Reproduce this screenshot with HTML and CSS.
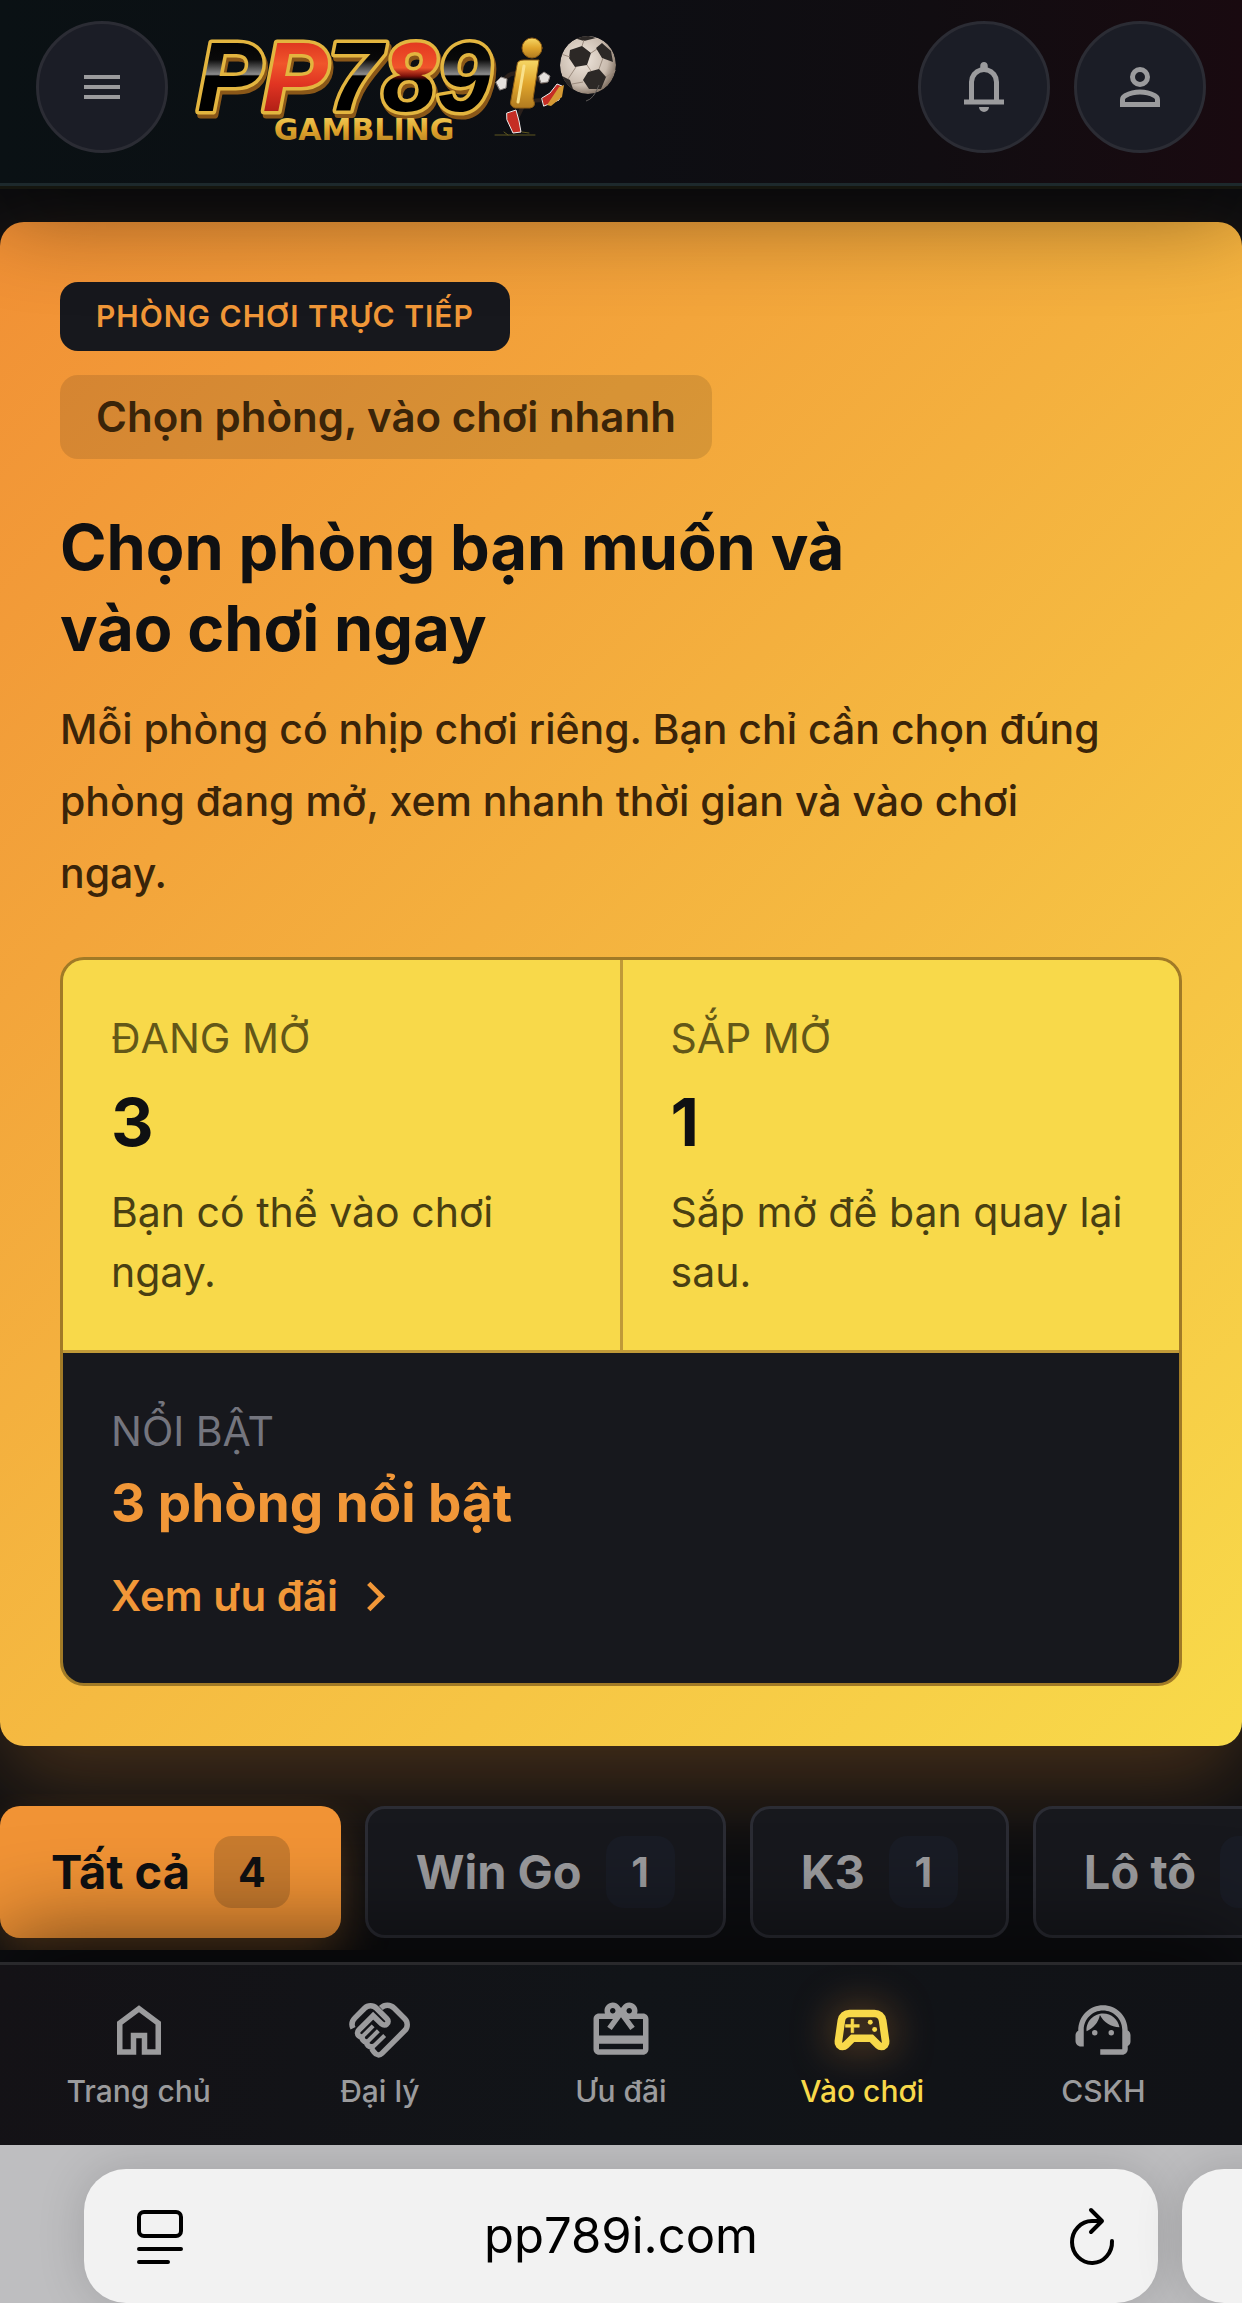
FILE: index.html
```html
<!DOCTYPE html>
<html lang="vi">

<head>

    <meta charset="UTF-8">
    <meta name="viewport" content="width=device-width, initial-scale=1">
    <title>PP789</title>

    <link rel="stylesheet" href="styles.css">

</head>

<body>

<header class="header">
    <button class="round-btn" type="button" aria-label="Menu">
        <svg class="icon-menu" viewBox="0 0 24 24"><path d="M3 18h18v-2H3zm0-5h18v-2H3zm0-7v2h18V6z"/></svg>
    </button>
    <a class="logo" href="#" aria-label="PP789 Gambling">
        <svg viewBox="0 0 426 120">
            <defs>
                <linearGradient id="gold" x1="0" y1="0" x2="0" y2="1">
                    <stop offset="0" stop-color="#f6d765"/>
                    <stop offset=".5" stop-color="#e0a52c"/>
                    <stop offset="1" stop-color="#b07a20"/>
                </linearGradient>
                <linearGradient id="black" gradientUnits="userSpaceOnUse" x1="0" y1="8" x2="0" y2="90">
                    <stop offset="0" stop-color="#000"/>
                    <stop offset=".3" stop-color="#0a0a0a"/>
                    <stop offset=".48" stop-color="#8c8c8c"/>
                    <stop offset=".5" stop-color="#000"/>
                    <stop offset="1" stop-color="#000"/>
                </linearGradient>
                <linearGradient id="red" gradientUnits="userSpaceOnUse" x1="0" y1="8" x2="0" y2="90">
                    <stop offset="0" stop-color="#d92c1c"/>
                    <stop offset=".35" stop-color="#f0552b"/>
                    <stop offset=".6" stop-color="#e03422"/>
                    <stop offset="1" stop-color="#a81c14"/>
                </linearGradient>
                <linearGradient id="redblack" gradientUnits="userSpaceOnUse" x1="0" y1="8" x2="0" y2="90">
                    <stop offset="0" stop-color="#e0301d"/>
                    <stop offset=".4" stop-color="#f0552b"/>
                    <stop offset=".5" stop-color="#7d120c"/>
                    <stop offset=".55" stop-color="#000"/>
                    <stop offset="1" stop-color="#000"/>
                </linearGradient>
                <radialGradient id="leather" cx=".4" cy=".4" r=".65">
                    <stop offset="0" stop-color="#f1e8df"/>
                    <stop offset=".7" stop-color="#c9bbae"/>
                    <stop offset="1" stop-color="#7a6a5c"/>
                </radialGradient>
                <clipPath id="ball"><ellipse cx="396" cy="51" rx="28" ry="29"/></clipPath>
            </defs>
            <text class="logo-main" x="5" y="84"><tspan fill="url(#black)">P</tspan><tspan fill="url(#red)">P</tspan><tspan fill="url(#black)">7</tspan><tspan fill="url(#redblack)">8</tspan><tspan fill="url(#black)">9</tspan></text>
            <text class="logo-sub" x="172" y="113">GAMBLING</text>
            <!-- mascot -->
            <g transform="translate(8 3)" stroke-linecap="round" stroke-linejoin="round">
                <path class="line" d="M319 44q-10-3-16 8M337 48q6 8 11 1M333 71q10-2 15 2M322 78l-4 8" stroke="#2a201b" stroke-width="4"/>
                <path d="M317 35q0-5 7-5h15l-6 39q4 8-3 9h-15q-6-2-4-8l5-29z" fill="url(#gold)" stroke="#8d5c14" stroke-width="1"/>
                <path class="line" d="M324 36l-6 36" stroke="#f9e08a" stroke-width="3"/>
                <ellipse cx="332" cy="18" rx="10" ry="10" fill="url(#gold)" stroke="#8d5c14"/>
                <path d="M296 52l5-5 6 2-1 9-6 2zM339 46l5-4 6 4-2 6-7 1z" fill="#e5e1dd" stroke="#8b8380"/>
                <path d="M342 68l8-5 7-9 5 2-3 14-15 6z" fill="#c52d24" stroke="#eee" stroke-width="1"/>
                <path d="M347 75l12-18 5-2-2 12-11 9z" fill="#d59a34"/>
                <path d="M307 83l9-3 3 11 2 11-8 1-6-13z" fill="#c52d24" stroke="#eee" stroke-width="1"/>
                <path class="line" d="M295 105h40M304 102l4 3M322 102l7 1" stroke="#5f5720" stroke-width="1"/>
            </g>
            <g transform="translate(0 -13)">
                <g clip-path="url(#ball)">
                    <ellipse cx="396" cy="51" rx="28" ry="29" fill="url(#leather)"/>
                    <path d="M378 36l12-4 9 7-4 12-12 2-6-9zM410 29l9 8 2 11-11-4-6-10zM396 58l11-3 7 8-5 12-12 0-6-9zM382 24l12-3 10 3-12 3zM370 62l8 4 4 12-10-6z" fill="#2c2826"/>
                    <path class="line" d="M399 39l6-4M395 51l4 6M378 43l-9-3M384 53l-8 12M411 44l-4 11M414 63l12-8M391 68l-11 2M390 32l2-6" stroke="#9b8b7e"/>
                </g>
            </g>
            <path class="line" d="M394 74q8-2 13-16" stroke="#5d5a58"/>
        </svg>
    </a>
    <div class="header-actions">
        <button class="round-btn" type="button" aria-label="Thông báo">
            <svg class="icon-top" viewBox="0 0 24 24"><path d="M4 19v-2h2v-7q0-2.075 1.25-3.687T10.5 4.2v-.7q0-.625.438-1.062T12 2t1.063.438T13.5 3.5v.7q2 .5 3.25 2.113T18 10v7h2v2zm8 3q-.825 0-1.412-.587T10 20h4q0 .825-.587 1.413T12 22m-4-5h8v-7q0-1.65-1.175-2.825T12 6T9.175 7.175T8 10z"/></svg>
        </button>
        <button class="round-btn" type="button" aria-label="Tài khoản">
            <svg class="icon-top" viewBox="0 0 24 24"><path d="M12 12q-1.65 0-2.825-1.175T8 8t1.175-2.825T12 4t2.825 1.175T16 8t-1.175 2.825T12 12m-8 8v-2.8q0-.85.438-1.562T5.6 14.55q1.55-.775 3.15-1.162T12 13t3.25.388t3.15 1.162q.725.375 1.163 1.088T20 17.2V20zm2-2h12v-.8q0-.275-.137-.5t-.363-.35q-1.35-.675-2.725-1.012T12 15t-2.775.338T6.5 16.35q-.225.125-.362.35T6 17.2zm6-8q.825 0 1.413-.587T14 8t-.587-1.412T12 6t-1.412.588T10 8t.588 1.413T12 10"/></svg>
        </button>
    </div>
</header>

<main class="content">
    <section class="hero">
        <span class="hero-badge">PHÒNG CHƠI TRỰC TIẾP</span>
        <span class="hero-chip">Chọn phòng, vào chơi nhanh</span>
        <h1 class="hero-title">Chọn phòng bạn muốn và<br>vào chơi ngay</h1>
        <p class="hero-text">Mỗi phòng có nhịp chơi riêng. Bạn chỉ cần chọn đúng phòng đang mở, xem nhanh thời gian và vào chơi ngay.</p>

        <div class="stats">
            <div class="stat">
                <div class="stat-label">ĐANG MỞ</div>
                <div class="stat-value">3</div>
                <div class="stat-note">Bạn có thể vào chơi ngay.</div>
            </div>
            <div class="stat">
                <div class="stat-label">SẮP MỞ</div>
                <div class="stat-value">1</div>
                <div class="stat-note">Sắp mở để bạn quay lại sau.</div>
            </div>
            <div class="stat stat-dark">
                <div class="stat-label">NỔI BẬT</div>
                <div class="stat-featured">3 phòng nổi bật</div>
                <a class="stat-link" href="#">Xem ưu đãi
                    <svg class="icon-chevron line" viewBox="0 0 24 24"><path d="M10 5l7 7-7 7" stroke="currentColor" stroke-width="2.500"/></svg>
                </a>
            </div>
        </div>
    </section>

    <div class="tabs">
        <button class="tab tab-active" type="button">Tất cả <span class="tab-count">4</span></button>
        <button class="tab" type="button">Win Go <span class="tab-count">1</span></button>
        <button class="tab" type="button">K3 <span class="tab-count">1</span></button>
        <button class="tab" type="button">Lô tô <span class="tab-count">1</span></button>
    </div>
</main>

<nav class="nav">
    <a class="nav-item" href="#">
        <svg class="icon-nav" viewBox="0 0 24 24"><path d="M6 19h3v-6h6v6h3v-9l-6-4.500L6 10zm-2 2V9l8-6 8 6v12h-7v-6h-2v6z"/></svg>
        Trang chủ
    </a>
    <a class="nav-item" href="#">
        <svg class="icon-nav line" viewBox="0 0 24 24" stroke="currentColor">
            <path stroke-width="2" d="M2.200 11.400C1.500 10 1.800 8.700 2.900 7.600L6.400 4.100C7.600 2.900 9.500 2.900 10.700 4.100L14.500 7.900C15.100 8.500 15.100 9.300 14.500 9.800C14 10.300 13.200 10.300 12.600 9.800L9.500 6.800L4.300 12C3.600 12.700 3.700 13.600 4.300 14.100C4.700 14.500 5.200 14.600 5.500 14.500C5.400 15.300 5.900 16.300 7.100 16.400C7.100 17.400 7.900 18.200 8.900 18.100C9 19 9.300 19.500 9.900 20.100C10.700 21.300 11.900 21.300 12.700 20.500L21 12.200C22.200 11 22.200 9.100 21 7.900L17.200 4.100C15.700 2.700 13.700 2.700 12.300 4"/>
            <path stroke-width="1.500" d="M5.600 14.400L9.500 10.500M7.500 16.200L11.400 12.300M9.500 18.100L13.700 14"/>
        </svg>
        Đại lý
    </a>
    <a class="nav-item" href="#">
        <svg class="icon-nav" viewBox="0 0 24 24"><path d="M20 6h-2.180c.11-.31.18-.65.18-1 0-1.660-1.340-3-3-3-1.050 0-1.960.54-2.500 1.350l-.5.67-.5-.68C10.960 2.540 10.050 2 9 2 7.340 2 6 3.340 6 5c0 .35.07.69.18 1H4c-1.110 0-1.990.89-1.990 2L2 19c0 1.110.89 2 2 2h16c1.110 0 2-.89 2-2V8c0-1.110-.89-2-2-2zm-5-2c.55 0 1 .45 1 1s-.45 1-1 1-1-.45-1-1 .45-1 1-1zM9 4c.55 0 1 .45 1 1s-.45 1-1 1-1-.45-1-1 .45-1 1-1zm11 15H4v-2h16v2zm0-5H4V8h5.080L7 10.830 8.620 12 11 8.760l1-1.360 1 1.360L15.380 12 17 10.830 14.920 8H20v6z"/></svg>
        Ưu đãi
    </a>
    <a class="nav-item nav-item-active" href="#">
        <svg class="icon-nav" viewBox="0 0 24 24">
            <path stroke="currentColor" stroke-width="0.800" d="M21.580 16.090l-1.090-7.660C20.210 6.460 18.520 5 16.530 5H7.470C5.480 5 3.790 6.460 3.510 8.430l-1.090 7.660C2.200 17.630 3.390 19 4.940 19c.68 0 1.320-.27 1.800-.75L9 16h6l2.250 2.250c.48.48 1.130.75 1.800.75 1.560 0 2.750-1.370 2.530-2.910zm-2.100.72c-.08.09-.21.19-.42.19-.15 0-.29-.06-.39-.16L15.830 14H8.170l-2.840 2.840c-.1.1-.24.16-.39.16-.21 0-.34-.1-.42-.19-.08-.09-.16-.23-.13-.44l1.090-7.660C5.630 7.740 6.480 7 7.470 7h9.060c.99 0 1.840.74 1.980 1.720l1.090 7.660c.03.2-.05.34-.12.43z"/>
            <path stroke="currentColor" stroke-width="0.200" d="M9 8H8v2H6v1h2v2h1v-2h2v-1H9z"/>
            <circle cx="16.600" cy="11.800" r="0.900"/>
            <circle cx="15" cy="9.200" r="0.900"/>
        </svg>
        Vào chơi
    </a>
    <a class="nav-item" href="#">
        <svg class="icon-nav" viewBox="0 0 24 24">
            <path d="M21 12.220C21 6.730 16.740 3 12 3c-4.690 0-9 3.650-9 9.280-.6.34-1 .98-1 1.720v2c0 1.100.9 2 2 2h1v-6.100c0-3.870 3.130-7 7-7s7 3.130 7 7V19h-8v2h8c1.100 0 2-.9 2-2v-1.220c.59-.31 1-.92 1-1.640v-2.300c0-.7-.41-1.310-1-1.620z"/>
            <circle cx="9" cy="13" r="1"/>
            <circle cx="15" cy="13" r="1"/>
            <path d="M18 11.030C17.520 8.180 15.040 6 12.050 6c-3.030 0-6.290 2.510-6.030 6.450 2.470-1.010 4.330-3.210 4.860-5.890 1.310 2.630 4 4.440 7.120 4.470z"/>
        </svg>
        CSKH
    </a>
</nav>

<div class="browser-bar">
    <div class="address">
        <button class="address-btn" type="button" aria-label="Trang">
            <svg class="icon-browser line" viewBox="0 0 60 60" stroke="#000" stroke-width="4" stroke-linecap="round">
                <rect x="19" y="6" width="42" height="24" rx="5"/>
                <path d="M19 43h42M19 56h29"/>
            </svg>
        </button>
        <input class="address-input" type="text" value="pp789i.com" aria-label="Địa chỉ">
        <button class="address-btn" type="button" aria-label="Tải lại">
            <svg class="icon-browser line" viewBox="0 0 60 60" stroke="#000" stroke-width="4" stroke-linecap="round" stroke-linejoin="round">
                <path d="M50 35a20 21 0 1 1-20-20h9M29 4l11 11-11 11"/>
            </svg>
        </button>
    </div>
    <div class="address"></div>
</div>

</body>
</html>
```
FILE: styles.css
```css
* {
    box-sizing: border-box;
}

html, body {
    margin: 0;
    padding: 0;
}

body {
    display: flex;
    flex-direction: column;
    min-height: 100vh;
    overflow-x: hidden;
    background: #0d0e11;
    color: #9b9b9d;
    font-family: Inter, "Noto Sans", sans-serif;
    font-size: 41px;
    line-height: 60px;
}

button, input {
    margin: 0;
    padding: 0;
    border: 0;
    background: none;
    color: inherit;
    font: inherit;
}

button {
    cursor: pointer;
}

a {
    color: inherit;
    text-decoration: none;
}

svg {
    display: block;
    overflow: visible;
    fill: currentColor;
}

.line {
    fill: none;
}

/* header */

.header {
    position: relative;
    z-index: 2;
    display: flex;
    align-items: center;
    gap: 24px;
    padding: 21px 36px 30px;
    border-bottom: 3px solid #1d292c;
    background: linear-gradient(90deg, #0a1114, #0d0e13 50%, #110d11 75%, #190a10);
    box-shadow: 0 3px 0 #15160f, 0 24px 96px rgba(0, 0, 0, 0.45);
}

.round-btn {
    display: flex;
    align-items: center;
    justify-content: center;
    width: 132px;
    height: 132px;
    border: 3px solid #2b2c34;
    border-radius: 50%;
    background: #1b1d26;
}

.icon-menu {
    width: 48px;
    height: 48px;
}

.icon-top {
    width: 60px;
    height: 60px;
}

.header-actions {
    display: flex;
    gap: 24px;
    margin-left: auto;
}

.logo svg {
    width: 426px;
    height: 120px;
}

.logo-main {
    font: italic bold 98px "Liberation Sans", sans-serif;
    paint-order: stroke;
    stroke: #e3b53f;
    stroke-width: 7px;
    stroke-linejoin: round;
    filter: drop-shadow(2px 4px 0 #8a5718);
}

.logo-sub {
    fill: url(#gold);
    font: bold 30px "DejaVu Sans", sans-serif;
    text-anchor: middle;
}

/* hero */

.content {
    flex: 1;
    padding-top: 36px;
}

.hero {
    display: flex;
    flex-direction: column;
    align-items: flex-start;
    padding: 60px;
    border-radius: 24px;
    background: linear-gradient(135deg, #f19035, #f8da4a);
    box-shadow: 0 36px 90px rgba(242, 148, 53, 0.25);
    color: #0f1012;
}

.hero-badge {
    padding: 0 36px;
    border-radius: 18px;
    background: #17181d;
    color: #f19738;
    font-size: 30px;
    font-weight: 600;
    line-height: 69px;
    letter-spacing: 1px;
}

.hero-chip {
    margin-top: 24px;
    padding: 12px 36px;
    border-radius: 18px;
    background: rgba(15, 16, 18, 0.12);
    color: #3a2409;
    font-size: 42px;
    font-weight: 600;
}

.hero-title {
    margin: 48px 0 0;
    font-size: 63px;
    font-weight: 700;
    line-height: 81px;
}

.hero-text {
    max-width: 1056px;
    margin: 24px 0 48px;
    color: #3a2409;
    font-weight: 500;
    line-height: 72px;
}

.stats {
    display: grid;
    grid-template-columns: 1fr 1fr;
    gap: 3px;
    align-self: stretch;
    overflow: hidden;
    border: 3px solid #a17a26;
    border-radius: 24px;
    background: #c09a38;
}

.stat {
    padding: 48px;
    background: #f8d94a;
}

.stat-label {
    color: #635718;
}

.stat-value {
    margin: 12px 0 18px;
    font-size: 66px;
    font-weight: 700;
    line-height: 84px;
}

.stat-note {
    color: #493f12;
}

.stat-dark {
    grid-column: span 2;
    background: #17181d;
    color: #f19738;
}

.stat-dark .stat-label {
    color: #74757e;
}

.stat-featured {
    margin: 6px 0 18px;
    font-size: 53px;
    font-weight: 700;
    line-height: 72px;
}

.stat-link {
    display: flex;
    align-items: center;
    gap: 12px;
    font-size: 42px;
    font-weight: 600;
    line-height: 78px;
}

.icon-chevron {
    width: 45px;
    height: 45px;
}

/* room filter */

.tabs {
    display: flex;
    gap: 24px;
    margin-top: 48px;
    padding-top: 12px;
    padding-bottom: 12px;
    overflow: hidden;
}

.tab {
    display: flex;
    flex: none;
    align-items: center;
    gap: 24px;
    height: 132px;
    padding: 0 48px;
    border: 3px solid #2b2c34;
    border-radius: 20px;
    background: #17181d;
    font-size: 47px;
    font-weight: 700;
}

.tab-count {
    min-width: 69px;
    padding: 0 24px;
    border-radius: 18px;
    background: #191c25;
    font-size: 41px;
    line-height: 72px;
}

.tab-active {
    border-color: transparent;
    background: #f19335 border-box;
    box-shadow: 0 24px 48px rgba(242, 148, 53, 0.3);
    color: #0f1012;
}

.tab-active .tab-count {
    background: rgba(15, 16, 18, 0.18);
}

/* bottom nav */

.nav {
    position: relative;
    z-index: 2;
    display: grid;
    grid-template-columns: repeat(5, 1fr);
    margin-top: 12px;
    padding: 32px 18px 30px;
    border-top: 3px solid #29292c;
    background: linear-gradient(100deg, #141216, #111418 50%, #111216);
    box-shadow: 0 -24px 96px rgba(0, 0, 0, 0.6);
}

.nav-item {
    display: flex;
    flex-direction: column;
    align-items: center;
    gap: 4px;
    font-size: 30px;
    font-weight: 500;
    line-height: 48px;
}

.nav-item-active {
    color: #f8d94a;
}

.nav-item-active .icon-nav {
    filter: drop-shadow(0 0 20px rgba(242, 148, 53, 0.6));
}

.icon-nav {
    width: 66px;
    height: 66px;
}

/* browser toolbar */

.browser-bar {
    position: relative;
    z-index: 3;
    display: flex;
    gap: 24px;
    padding: 24px 0 0 84px;
    overflow: hidden;
    background: #bebec0;
}

.address {
    display: flex;
    flex: 0 0 calc(100% - 84px);
    align-items: center;
    justify-content: space-between;
    height: 134px;
    padding: 0 36px;
    border-radius: 42px;
    background: #f2f2f2;
    box-shadow: 0 0 48px rgba(0, 0, 0, 0.15);
    color: #000;
}

.address-input {
    flex: 1;
    min-width: 0;
    font-size: 49px;
    text-align: center;
}

.icon-browser {
    width: 60px;
    height: 60px;
}
```
